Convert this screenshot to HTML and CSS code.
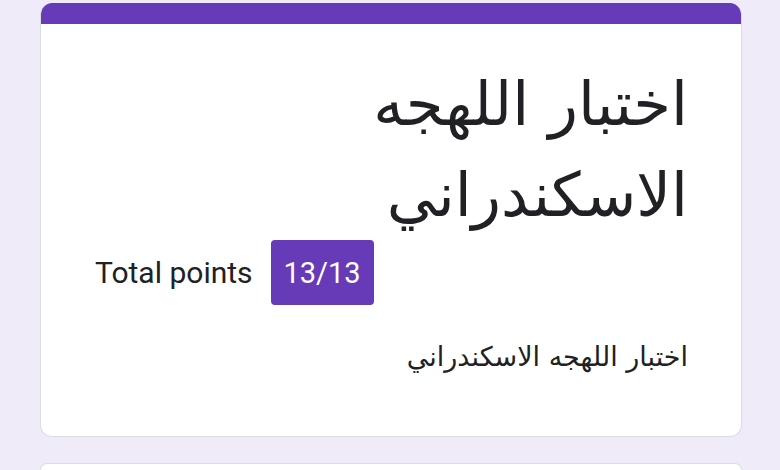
FILE: index.html
```html
<!DOCTYPE html>
<html lang="ar">
<head>
<meta charset="utf-8">
<link rel="stylesheet" href="styles.css">
</head>
<body>
<div class="page">
  <div class="card header-card">
    <div class="card-top"></div>
    <div class="card-body">
      <h1 class="title" dir="rtl">اختبار اللهجه الاسكندراني</h1>
      <div class="points-row">
        <span class="points-label">Total points</span>
        <span class="points-badge">13/13</span>
      </div>
      <p class="desc" dir="rtl">اختبار اللهجه الاسكندراني</p>
    </div>
  </div>
  <div class="card next-card"></div>
</div>
</body>
</html>
```
FILE: styles.css
```css
html, body {
  margin: 0;
  padding: 0;
  background: #efebf8;
  overflow: hidden;
}
.page {
  width: 780px;
  height: 470px;
  padding: 3px 38px 0 40px;
  box-sizing: border-box;
  display: flex;
  flex-direction: column;
  gap: 26px;
  overflow: hidden;
}
.card {
  background: #fff;
  border: 1px solid #dadce0;
  border-radius: 12px;
  overflow: hidden;
  flex-shrink: 0;
}
.header-card {
  border-top: none;
  height: 434px;
  box-sizing: border-box;
}
.card-top {
  height: 21px;
  background: #673ab7;
}
.card-body {
  padding: 0 53px 0 54px;
}
.title {
  margin: 0;
  padding-top: 34px;
  font-family: "DejaVu Sans", sans-serif;
  font-weight: normal;
  font-size: 61px;
  line-height: 91px;
  color: #202124;
  text-align: right;
  padding-left: 220px;
}
.points-row {
  display: flex;
  align-items: center;
  gap: 18px;
}
.points-label {
  font-family: Roboto, sans-serif;
  font-size: 30px;
  color: #202124;
}
.points-badge {
  background: #673ab7;
  color: #fff;
  font-family: Roboto, sans-serif;
  font-size: 29px;
  border-radius: 4px;
  width: 103px;
  height: 65px;
  display: flex;
  align-items: center;
  justify-content: center;
}
.desc {
  margin: 36px 0 0;
  font-family: "DejaVu Sans", sans-serif;
  font-size: 27px;
  color: #202124;
  text-align: right;
}
.next-card {
  flex: 1 1 auto;
  min-height: 0;
  border-bottom: none;
  border-radius: 12px 12px 0 0;
}
```
